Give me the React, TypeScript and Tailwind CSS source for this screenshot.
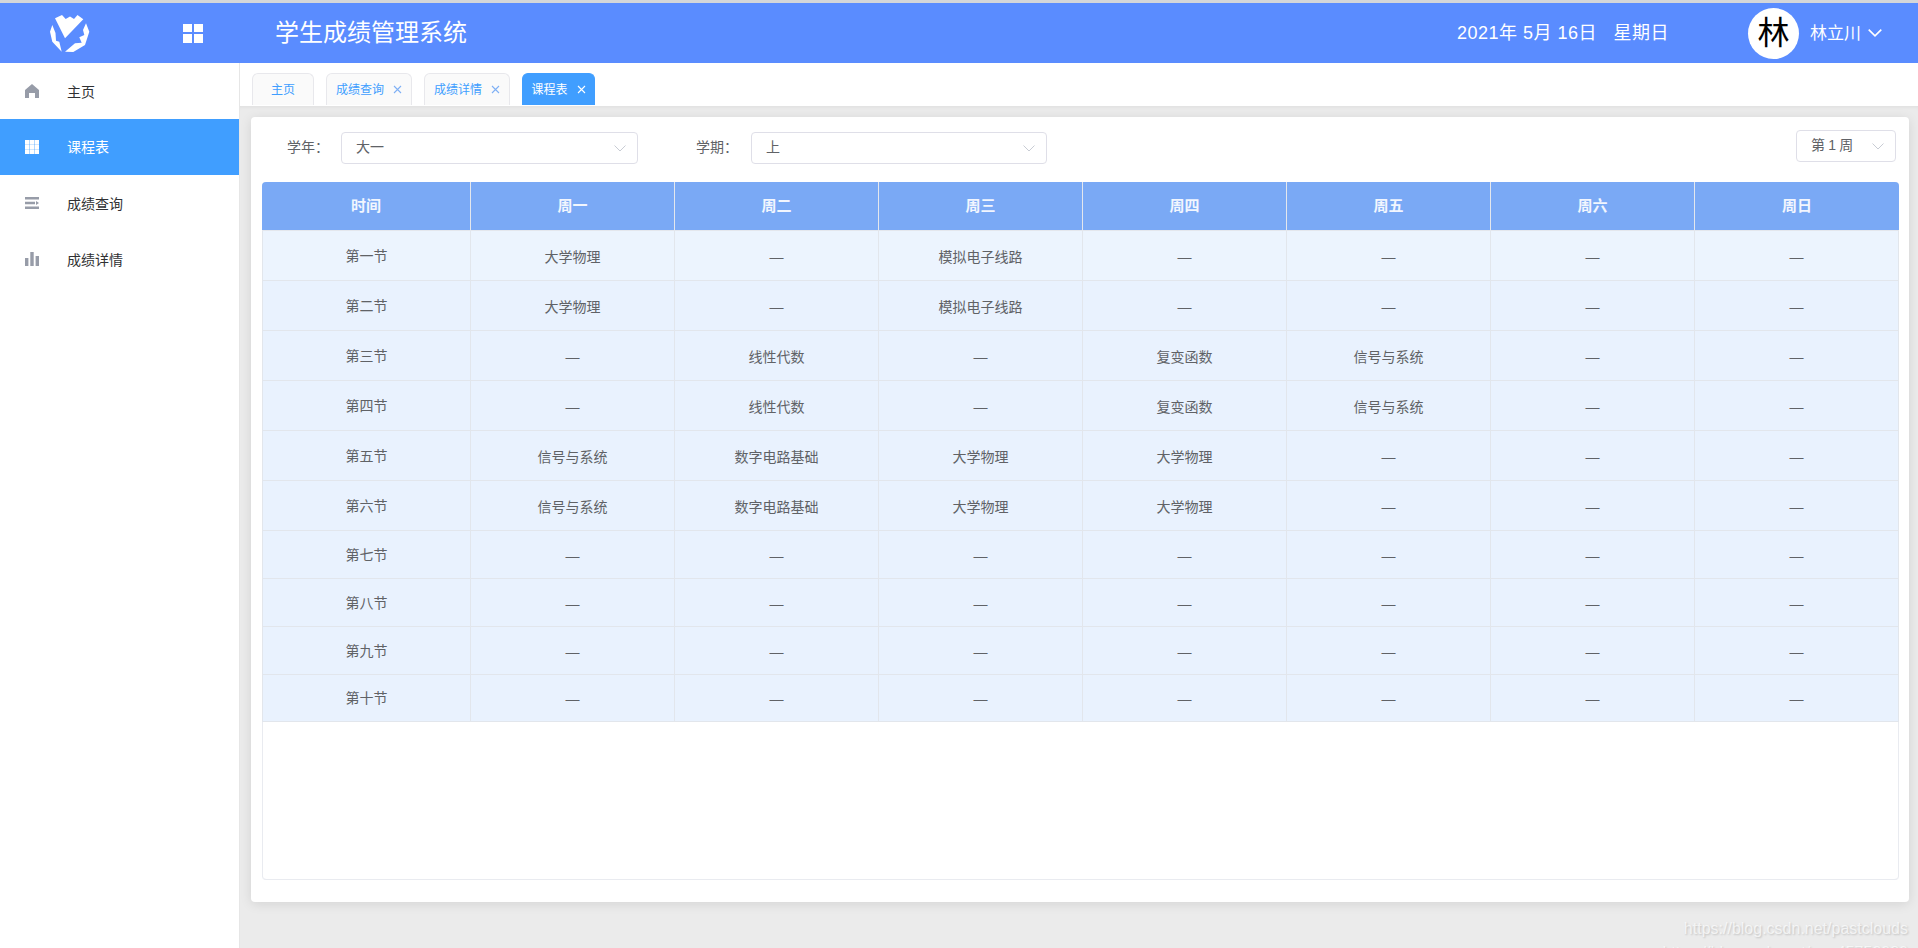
import React from "react";

const dash = "—";
const rows: { t: string; c: string[]; h: string }[] = [
  { t: "第一节", c: ["大学物理", dash, "模拟电子线路", dash, dash, dash, dash], h: "h-[50px] bg-[#ecf4fe]" },
  { t: "第二节", c: ["大学物理", dash, "模拟电子线路", dash, dash, dash, dash], h: "h-[50px] bg-[#e9f2fe]" },
  { t: "第三节", c: [dash, "线性代数", dash, "复变函数", "信号与系统", dash, dash], h: "h-[50px] bg-[#e9f2fe]" },
  { t: "第四节", c: [dash, "线性代数", dash, "复变函数", "信号与系统", dash, dash], h: "h-[50px] bg-[#e9f2fe]" },
  { t: "第五节", c: ["信号与系统", "数字电路基础", "大学物理", "大学物理", dash, dash, dash], h: "h-[50px] bg-[#e9f2fe]" },
  { t: "第六节", c: ["信号与系统", "数字电路基础", "大学物理", "大学物理", dash, dash, dash], h: "h-[50px] bg-[#e9f2fe]" },
  { t: "第七节", c: [dash, dash, dash, dash, dash, dash, dash], h: "h-[48px] bg-[#e9f2fe]" },
  { t: "第八节", c: [dash, dash, dash, dash, dash, dash, dash], h: "h-[48px] bg-[#e9f2fe]" },
  { t: "第九节", c: [dash, dash, dash, dash, dash, dash, dash], h: "h-[48px] bg-[#e9f2fe]" },
  { t: "第十节", c: [dash, dash, dash, dash, dash, dash, dash], h: "h-[47px] bg-[#e9f2fe]" },
];
const heads = ["时间", "周一", "周二", "周三", "周四", "周五", "周六", "周日"];

function Chevron({ className, width = "1" }: { className: string; width?: string }) {
  return (
    <svg viewBox="0 0 12 7" fill="none" stroke="currentColor" strokeWidth={width} className={className}>
      <path d="M0.5 0.5 L6 6 L11.5 0.5" />
    </svg>
  );
}

function Close({ className }: { className: string }) {
  return (
    <svg viewBox="0 0 9 9" fill="none" stroke="currentColor" strokeWidth="1.1" className={className}>
      <path d="M1 1 L8 8 M8 1 L1 8" />
    </svg>
  );
}

function Logo() {
  return (
    <svg viewBox="0 0 40 40" fill="#fff" className="h-10 w-10">
      <polygon points="5,5.3 12,2 15.7,6 20,3.5 24,6 27.5,2 33.3,6.3 15,25.3" />
      <polygon points="2.3,12 0,18.7 2.3,28.7 11.7,38.7 9.3,28.7 6,27.7 5.5,20" />
      <polygon points="36,10.3 39.3,18.7 35,32 23.3,39 15,38.7 25,30.3 31.7,29.7 29.3,24.3 34.3,22 33,17" />
    </svg>
  );
}

function HomeIcon() {
  return (
    <svg viewBox="0 0 14 14" fill="#979ca8" className="h-3.5 w-3.5">
      <path d="M7 0 L14 6 V14 H10 V9 H4 V14 H0 V6 Z" />
    </svg>
  );
}
function TableIcon() {
  return (
    <svg viewBox="0 0 14 14" fill="#fff" className="h-3.5 w-3.5">
      <path d="M0 0h4.4v4.4H0zM4.8 0h4.4v4.4H4.8zM9.6 0H14v4.4H9.6zM0 4.8h4.4v4.4H0zM4.8 4.8h4.4v4.4H4.8zM9.6 4.8H14v4.4H9.6zM0 9.6h4.4V14H0zM4.8 9.6h4.4V14H4.8zM9.6 9.6H14V14H9.6z" />
    </svg>
  );
}
function ListIcon() {
  return (
    <svg viewBox="0 0 14 14" fill="#979ca8" className="h-3.5 w-3.5">
      <path d="M0 1h14v2.4H0zM0 5.8h10v2.4H0zM11 5l3 2-3 2zM0 10.6h14V13H0z" />
    </svg>
  );
}
function BarsIcon() {
  return (
    <svg viewBox="0 0 14 14" fill="#979ca8" className="h-3.5 w-3.5">
      <path d="M0 6h3.4v8H0zM5.3 0h3.4v14H5.3zM10.6 4H14v10h-3.4z" />
    </svg>
  );
}

const menu = [
  { label: "主页", icon: <HomeIcon />, active: false },
  { label: "课程表", icon: <TableIcon />, active: true },
  { label: "成绩查询", icon: <ListIcon />, active: false },
  { label: "成绩详情", icon: <BarsIcon />, active: false },
];

function Tab({ label, closable, active, w }: { label: string; closable?: boolean; active?: boolean; w: string }) {
  return (
    <div
      className={`flex h-[32px] items-center justify-center gap-[9px] rounded-t-md border border-b-0 text-[12px] ${w} ${
        active ? "border-[#409eff] bg-[#409eff] text-white" : "border-[#e8e8ec] bg-[#fafafa] text-[#409eff]"
      }`}
    >
      <span>{label}</span>
      {closable && <Close className={`h-[9px] w-[9px] ${active ? "text-white" : "text-[#7fb0f5]"}`} />}
    </div>
  );
}

function Select({ value, w }: { value: string; w: string }) {
  return (
    <div className={`flex h-[32px] items-center justify-between rounded border border-[#dfdfe8] bg-white pl-[14px] pr-[11px] text-[14px] text-[#606266] ${w}`}>
      <span className="-mt-[1px]">{value}</span>
      <Chevron className="h-[7px] w-[12px] text-[#c8ccd4]" />
    </div>
  );
}

export default function App() {
  return (
    <div className="relative flex h-[948px] w-[1918px] flex-col overflow-hidden bg-white font-['Liberation_Sans','Noto_Sans_CJK_SC',sans-serif]">
      <header className="flex h-[63px] shrink-0 items-center border-t-[3px] border-[#d4d6d9] bg-[#5a8cff] text-white">
        <div className="ml-[50px] flex h-10 w-10 items-center">
          <Logo />
        </div>
        <div className="ml-[93px] grid h-[19px] w-[20px] grid-cols-2 gap-[2px]">
          <span className="bg-white" />
          <span className="bg-white" />
          <span className="bg-white" />
          <span className="bg-white" />
        </div>
        <div className="ml-[72px] text-[24px] leading-none">学生成绩管理系统</div>
        <div className="ml-auto mt-[1px] whitespace-pre text-[18px] tracking-[0.5px]">2021年 5月 16日   星期日</div>
        <div className="ml-[79px] flex h-[51px] w-[51px] items-center justify-center rounded-full bg-white text-[32px] text-black">林</div>
        <div className="ml-[11px] mt-[1px] text-[17px]">林立川</div>
        <Chevron width="1.4" className="ml-[7px] mr-[36px] h-[8px] w-[14px] text-white" />
      </header>

      <div className="flex min-h-0 flex-1">
        <aside className="w-[240px] shrink-0 border-r border-[#e6e6e6] bg-white">
          {menu.map((m) => (
            <div
              key={m.label}
              className={`flex h-[56px] items-center pl-[25px] text-[14px] ${m.active ? "bg-[#409eff] text-white" : "text-[#303133]"}`}
            >
              {m.icon}
              <span className={`ml-[28px] ${m.active ? "" : "mt-[2px]"}`}>{m.label}</span>
            </div>
          ))}
        </aside>

        <main className="flex min-w-0 flex-1 flex-col">
          <div className="flex h-[43px] shrink-0 items-end gap-3 pb-[1px] pl-[12px]">
            <Tab label="主页" w="w-[62px]" />
            <Tab label="成绩查询" closable w="w-[86px]" />
            <Tab label="成绩详情" closable w="w-[86px]" />
            <Tab label="课程表" closable active w="w-[73px]" />
          </div>

          <div className="flex-1 bg-[#ebebeb] pl-[11px] pr-[9px] pt-[11px] shadow-[inset_0_4px_4px_-3px_rgba(0,0,0,0.06)]">
            <div className="flex h-[785px] flex-col rounded bg-white pl-[11px] pr-[10px] shadow-[0_2px_12px_rgba(0,0,0,0.1)]">
              <div className="flex h-[65px] shrink-0 items-start pl-[25px] pr-[3px] pt-[13px] text-[14px] text-[#606266]">
                <div className="mt-[2px] flex items-center">
                  <span className="-mt-[1px] w-[54px]">学年：</span>
                  <Select value="大一" w="w-[297px]" />
                </div>
                <div className="ml-[58px] mt-[2px] flex items-center">
                  <span className="-mt-[1px] w-[55px]">学期：</span>
                  <Select value="上" w="w-[296px]" />
                </div>
                <Select value="第 1 周" w="ml-auto w-[100px] tracking-[-0.3px]" />
              </div>

              <div className="h-[698px] overflow-hidden rounded border-b border-[#e9ebf0] shadow-[inset_1px_0_0_#e9ebf0,inset_-1px_0_0_#e9ebf0]">
                <table className="w-full table-fixed border-separate border-spacing-0 text-center text-[14px] text-[#606266]">
                  <colgroup>
                    <col className="w-[209px]" />
                    <col span={6} className="w-[204px]" />
                    <col />
                  </colgroup>
                  <thead>
                    <tr className="h-[49px] bg-[#7aa9f5] text-white/90">
                      {heads.map((h, i) => (
                        <th key={h} className={`border-b border-[#e4e7ed] text-[15px] font-bold ${i < 7 ? "border-r" : ""}`}>
                          {h}
                        </th>
                      ))}
                    </tr>
                  </thead>
                  <tbody>
                    {rows.map((r) => (
                      <tr key={r.t} className={r.h}>
                        <td className="border-b border-l border-r border-[#e2e6ec] p-0 pt-[1px]">{r.t}</td>
                        {r.c.map((c, i) => (
                          <td key={i} className="border-b border-r border-[#e2e6ec] p-0 pt-[3px]">
                            {c}
                          </td>
                        ))}
                      </tr>
                    ))}
                  </tbody>
                </table>
              </div>
            </div>
          </div>
        </main>
      </div>

      <div className="absolute right-[10px] top-[919px] text-[16px] leading-[20px] text-white/70 [text-shadow:1px_1px_2px_rgba(0,0,0,0.18)]">
        https://blog.csdn.net/pastclouds
      </div>
      <div className="absolute right-[10px] top-[943px] text-[16px] leading-[20px] text-white/70 [text-shadow:1px_1px_2px_rgba(0,0,0,0.18)]">
        https://blog.csdn.net/qq_45752080
      </div>
    </div>
  );
}
